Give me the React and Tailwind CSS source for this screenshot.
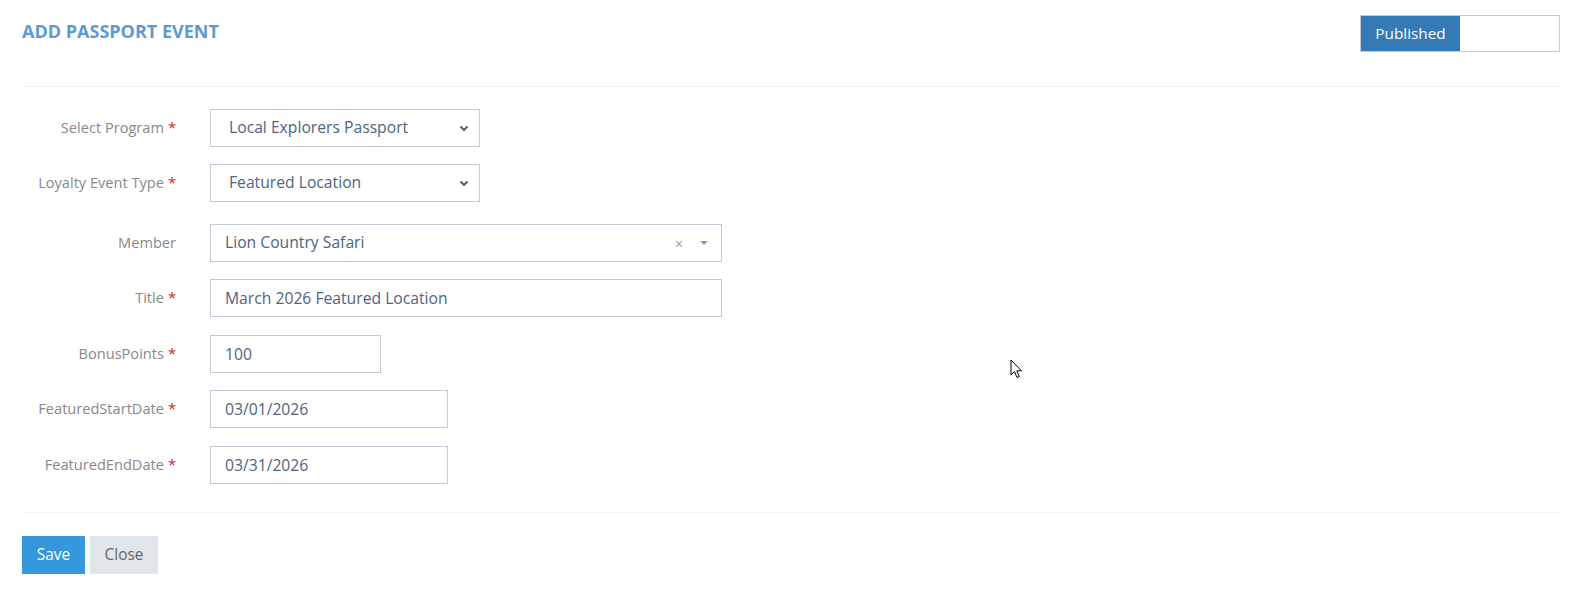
import { useState } from "react";

const font = { fontFamily: '"Open Sans", "Liberation Sans", sans-serif' };

const Label = ({ text, required }) => (
  <label className="w-[154px] mr-[34px] shrink-0 text-right text-[14.6px] text-[#888]">
    {text}
    {required && <span className="text-[#e02222] ml-[4px]">*</span>}
  </label>
);

const Chevron = () => (
  <svg width="10" height="7" viewBox="0 0 10 7" className="shrink-0">
    <path d="M1.5 1.5 L5 5 L8.5 1.5" fill="none" stroke="#3f5570" strokeWidth="1.8" />
  </svg>
);

const SelectBox = ({ value, width }) => (
  <div
    className={`${width} h-[38px] border border-[#c2cad8] bg-white flex items-center justify-between pl-[18px] pr-[10px] text-[15.7px] text-[#4e6480]`}
  >
    <span>{value}</span>
    <Chevron />
  </div>
);

const TextInput = ({ value, width }) => (
  <input
    defaultValue={value}
    className={`${width} h-[38px] border border-[#c2cad8] bg-white px-[14px] text-[15.7px] text-[#4e6480] outline-none`}
    style={font}
  />
);

export default function App() {
  const [published, setPublished] = useState(true);

  return (
    <div className="relative min-h-[591px] bg-white" style={font}>
      <div className="mx-[22px]">
        <div className="flex items-start justify-between pt-[15px] pb-[34px] border-b border-[#eef1f5]">
          <h3 className="mt-[3px] text-[18px] font-bold uppercase text-[#5c9bd1]">
            Add Passport Event
          </h3>
          <button
            onClick={() => setPublished((p) => !p)}
            className="flex h-[37px] w-[200px] border border-[#c2cad8] text-[15.3px]"
          >
            <span className="w-[99px] h-full flex items-center justify-center bg-[#337ab7] text-white">
              Published
            </span>
            <span className="flex-1 bg-white" />
          </button>
        </div>

        <form className="pt-[22px] pb-[28px] border-b border-[#eef1f5]">
          <div className="flex items-center">
            <Label text="Select Program" required />
            <SelectBox value="Local Explorers Passport" width="w-[270px]" />
          </div>
          <div className="flex items-center mt-[17px]">
            <Label text="Loyalty Event Type" required />
            <SelectBox value="Featured Location" width="w-[270px]" />
          </div>
          <div className="flex items-center mt-[22px]">
            <Label text="Member" />
            <div className="w-[512px] h-[38px] border border-[#c2cad8] bg-white flex items-center pl-[14px] pr-[13px] text-[15.7px] text-[#4e6480]">
              <span className="flex-1">Lion Country Safari</span>
              <span className="text-[#999] text-[14px] mr-[17px]">×</span>
              <svg width="8" height="4" viewBox="0 0 8 4">
                <path d="M0 0 L8 0 L4 4 Z" fill="#999" />
              </svg>
            </div>
          </div>
          <div className="flex items-center mt-[17px]">
            <Label text="Title" required />
            <TextInput value="March 2026 Featured Location" width="w-[512px]" />
          </div>
          <div className="flex items-center mt-[18px]">
            <Label text="BonusPoints" required />
            <TextInput value="100" width="w-[171px]" />
          </div>
          <div className="flex items-center mt-[17px]">
            <Label text="FeaturedStartDate" required />
            <TextInput value="03/01/2026" width="w-[238px]" />
          </div>
          <div className="flex items-center mt-[18px]">
            <Label text="FeaturedEndDate" required />
            <TextInput value="03/31/2026" width="w-[238px]" />
          </div>
        </form>

        <div className="flex gap-[5px] pt-[23px]">
          <button className="h-[38px] w-[63px] bg-[#3598dc] text-white text-[15.4px]">Save</button>
          <button className="h-[38px] w-[68px] bg-[#e1e5ec] text-[#666] text-[15.4px]">Close</button>
        </div>
      </div>

      <svg
        width="13"
        height="21"
        viewBox="0 0 13 21"
        className="absolute left-[1010px] top-[359px]"
      >
        <path
          d="M1 1 L1 16 L4.5 12.5 L7 18.5 L9.3 17.5 L6.8 11.8 L11.5 11.8 Z"
          fill="white"
          stroke="black"
          strokeWidth="1"
          strokeLinejoin="round"
        />
      </svg>
    </div>
  );
}
